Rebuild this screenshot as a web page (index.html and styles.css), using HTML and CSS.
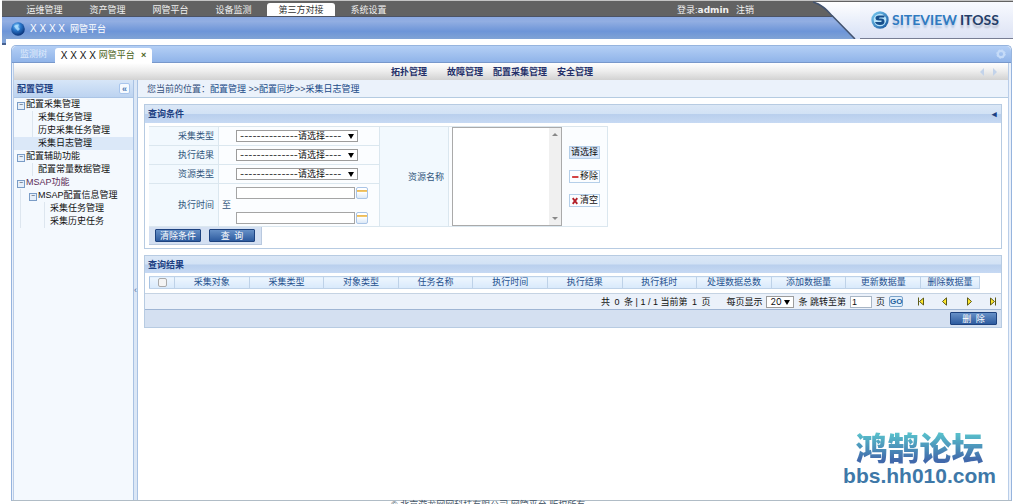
FILE: index.html
```html
<!DOCTYPE html>
<html lang="zh-CN">
<head>
<meta charset="utf-8">
<title>网管平台</title>
<link rel="stylesheet" href="styles.css">
</head>
<body>
<header class="header">
  <div class="topbar">
    <nav class="topnav">
      <a href="#">运维管理</a><a href="#">资产管理</a><a href="#">网管平台</a><a href="#">设备监测</a><a href="#" class="current">第三方对接</a><a href="#">系统设置</a>
    </nav>
    <div class="user"><span>登录:<b>admin</b></span><a href="#">注销</a></div>
  </div>
  <div class="platform">
    <svg class="globe" viewBox="0 0 14 14"><defs><radialGradient id="g1" cx="40%" cy="30%" r="75%"><stop offset="0" stop-color="#8fd4ff"/><stop offset=".4" stop-color="#2a78cc"/><stop offset="1" stop-color="#062a6e"/></radialGradient></defs><circle cx="7" cy="7" r="6.8" fill="url(#g1)"/><path d="M3 4Q5 2 8 2.500L7 5L9 7L7 9L5 7Z" fill="#b5e2ff" opacity=".75"/></svg>
    <span class="xs">X X X X</span><span>网管平台</span>
  </div>
  <div class="brand">
    <svg class="brand-shape" viewBox="0 0 200 39" preserveAspectRatio="none"><defs><linearGradient id="g2" x2="0" y2="1"><stop offset="0" stop-color="#fff"/><stop offset="1" stop-color="#d5e0f6"/></linearGradient><linearGradient id="g3" x2="0" y2="1"><stop offset="0" stop-color="#f8faff"/><stop offset="1" stop-color="#dde3f4"/></linearGradient></defs><path d="M0 1C8 3 13 8 19 15L42 39H47V1Z" fill="url(#g2)"/><path d="M0 1C8 3 13 8 19 15L42 39" fill="none" stroke="#42536f" stroke-width="1.500"/><path d="M47 1H200V38H47Z" fill="url(#g3)"/><path d="M47 38.500H200" stroke="#777c91"/></svg>
    <div class="logo">
      <svg viewBox="0 0 18 18"><defs><linearGradient id="g4" x2="1" y2="1"><stop offset="0" stop-color="#7dd0f5"/><stop offset="1" stop-color="#11509b"/></linearGradient></defs><circle cx="9" cy="9" r="8.700" fill="url(#g4)"/><circle cx="9" cy="9" r="6.300" fill="#b9e4fa"/><path d="M14 4.500H8Q4.500 4.500 4.500 7Q4.500 9.500 8 9.500H10.500Q11 10.500 10 11H4Q5 14 9 14Q13.500 14 13.500 10.500Q13.500 7.500 10 7.500H8Q8 6.500 9 6.500H13Z" fill="#174f8c"/></svg>
      <span class="siteview">SITEVIEW</span><span class="itoss">ITOSS</span>
    </div>
  </div>
</header>

<main class="frame">
  <div class="tabs">
    <a href="#" class="tab">监测树</a>
    <a href="#" class="tab open"><span class="xs">X X X X</span>网管平台<b>×</b></a>
    <svg class="gear" viewBox="0 0 10 10"><circle cx="5" cy="5" r="3.200" fill="none" stroke="#c5dbf8" stroke-width="2.200"/><circle cx="5" cy="5" r="4.300" fill="none" stroke="#c5dbf8" stroke-dasharray="1.500 1.900"/></svg>
  </div>
  <div class="inner">
    <nav class="menu">
      <a href="#">拓扑管理</a><a href="#">故障管理</a><a href="#">配置采集管理</a><a href="#">安全管理</a>
      <svg class="arrows" viewBox="0 0 20 8"><path d="M5 0V8L1 4ZM14 0V8L18 4Z" fill="#c3d3ea"/></svg>
    </nav>
    <div class="body">
      <aside class="side">
        <div class="side-head"><span>配置管理</span><button aria-label="收起">«</button></div>
        <ul class="tree">
          <li><a href="#" class="node">配置采集管理</a>
            <ul><li><a href="#">采集任务管理</a></li><li><a href="#">历史采集任务管理</a></li><li class="selected"><a href="#">采集日志管理</a></li></ul></li>
          <li><a href="#" class="node">配置辅助功能</a>
            <ul><li><a href="#">配置常量数据管理</a></li></ul></li>
          <li><a href="#" class="node msap">MSAP功能</a>
            <ul class="deep"><li><a href="#" class="node">MSAP配置信息管理</a>
              <ul><li><a href="#">采集任务管理</a></li><li><a href="#">采集历史任务</a></li></ul></li></ul></li>
        </ul>
      </aside>
      <div class="splitter">‹</div>
      <section class="content">
        <div class="crumbs">您当前的位置：<a href="#">配置管理</a> &gt;&gt;<a href="#">配置同步</a>&gt;&gt;<a href="#">采集日志管理</a></div>

        <form class="panel query">
          <h2>查询条件<span>◂</span></h2>
          <div class="grid">
            <label class="name" for="ctype">采集类型</label>
            <div class="field"><span class="pick"><select id="ctype"><option>--------------请选择----</option></select></span></div>
            <label class="name" for="result">执行结果</label>
            <div class="field"><span class="pick"><select id="result"><option>--------------请选择----</option></select></span></div>
            <label class="name" for="rtype">资源类型</label>
            <div class="field"><span class="pick"><select id="rtype"><option>--------------请选择----</option></select></span></div>
            <label class="name" for="from">执行时间</label>
            <div class="field times"><label for="to">至</label>
              <div class="dates">
                <div><input id="from" type="text"><button type="button" class="cal" aria-label="日历"></button></div>
                <div><input id="to" type="text"><button type="button" class="cal" aria-label="日历"></button></div>
              </div></div>
            <label class="name tall" for="names">资源名称</label>
            <div class="field tall"><div class="list"><select id="names" multiple></select><span class="bar"><i></i><i></i></span></div></div>
            <div class="field tall acts"><button type="button" class="choose">请选择</button><button type="button"><svg viewBox="0 0 7 7"><path d="M1 3.500H6.500" stroke="#c22" stroke-width="1.500"/></svg>移除</button><button type="button"><svg viewBox="0 0 7 7"><path d="M1.500 1L5.500 6M5.500 1L1.500 6" stroke="#b3202a" stroke-width="1.600"/></svg>清空</button></div>
          </div>
          <div class="submit"><button type="reset" class="blue">清除条件</button><button type="button" class="blue">查&ensp;询</button></div>
        </form>

        <div class="panel results">
          <h2>查询结果</h2>
          <table class="data">
            <thead><tr><th class="check"><input type="checkbox" aria-label="全选"></th><th>采集对象</th><th>采集类型</th><th>对象类型</th><th>任务名称</th><th>执行时间</th><th>执行结果</th><th>执行耗时</th><th>处理数据总数</th><th>添加数据量</th><th>更新数据量</th><th class="last">删除数据量</th></tr></thead>
          </table>
          <div class="pager">
            <span class="count">共&ensp;0&ensp;条 | 1 / 1 当前第&ensp;1&ensp;页</span>
            <label for="size">每页显示</label><span class="pick small"><select id="size"><option>20</option></select></span>
            <label for="page">条 跳转至第</label><input id="page" type="text" value="1"><span>页</span><button class="go">GO</button>
            <div class="turns">
              <button aria-label="首页"><svg viewBox="0 0 8 9"><path d="M1.500 .5V8.500M6.500 1V8L2.500 4.500Z"/></svg></button>
              <button aria-label="上一页"><svg viewBox="0 0 8 9"><path d="M5.500 .8V8.200L1.500 4.500Z"/></svg></button>
              <button aria-label="下一页"><svg viewBox="0 0 8 9"><path d="M2.500 .8V8.200L6.500 4.500Z"/></svg></button>
              <button aria-label="末页"><svg viewBox="0 0 8 9"><path d="M6.500 .5V8.500M1.500 1V8L5.500 4.500Z"/></svg></button>
            </div>
          </div>
          <div class="foot"><button class="blue">删&ensp;除</button></div>
        </div>
        <div class="mark"><strong>鸿鹄论坛</strong><span>bbs.hh010.com</span></div>
      </section>
    </div>
  </div>
</main>
<footer class="copy">© 北京游龙网网科技有限公司 网管平台 版权所有</footer>
</body>
</html>
```

FILE: styles.css
```css
* { box-sizing: border-box; }
body {
  margin: 0; height: 100vh; overflow: hidden; display: flex; flex-direction: column;
  background: #fff; color: #111;
  font: 9px/12px "Liberation Sans", "Noto Sans CJK SC", sans-serif;
}
a { color: inherit; text-decoration: none; }
button, input, select { font: inherit; color: inherit; margin: 0; border-radius: 0; }
button { padding: 0; background: none; border: 0; }
ul { list-style: none; margin: 0; padding: 0; }
.xs { font-size: 10px; }

.header {
  position: relative; flex: none; margin: 0 0 6px 2px; border-top: 1px solid #c4c4c4;
  display: grid; grid-template-columns: 1fr 200px; grid-template-rows: 16px 22px;
}
.header::after { content: ""; position: absolute; left: 0; top: 38px; width: 4px; height: 6px; background: linear-gradient(#7fa2d8 70%, #47618f 70%); }
.topbar { grid-area: 1 / 1 / 2 / 3; display: flex; justify-content: space-between; background: #626262; border-bottom: 1px solid #4c5364; color: #f0f0f0; }
.topnav { display: flex; padding: 2px 0 0 11px; }
.topnav a { width: 63px; text-align: center; line-height: 14px; }
.topnav .current { width: 68px; margin: 0 2px; color: #333; background: #fff; border-radius: 3px 3px 0 0; }
.user { display: flex; gap: 7px; margin-right: 259px; line-height: 18px; }
.user b { font-family: "DejaVu Sans", sans-serif; font-size: 9px; }
.platform { grid-area: 2 / 1 / 3 / 3; display: flex; align-items: center; gap: 5px; padding: 1px 0 0 9px; color: #fff; background: linear-gradient(#8ba9e2, #92aee2 20%, #6d95d8 65%, #80a3d5); }
.globe { width: 14px; height: 14px; }
.brand { grid-area: 1 / 2 / 3 / 3; position: relative; display: flex; }
.brand-shape { position: absolute; left: 0; top: 0; width: 100%; height: 100%; }
.logo { position: relative; display: flex; align-items: center; gap: 3px; padding: 0 0 0 58px; }
.logo svg { width: 18px; height: 18px; }
.siteview { color: #2f7ac0; text-shadow: 0 3px 2px #b6c9e5; font: bold 14px/16px Lato, sans-serif; }
.itoss { color: #243e68; text-shadow: 0 3px 2px #b6bdd0; font: bold 14px/16px Lato, sans-serif; }

.frame { flex: 1; min-height: 0; display: flex; flex-direction: column; margin: 0 1px 0 11px; border: 1px solid #96b4de; border-bottom-color: #b0bcc6; border-radius: 5px 5px 0 0; background: #eaf1fb; }
.tabs { flex: none; display: flex; align-items: flex-end; height: 17px; padding: 0 5px 0 0; border-radius: 5px 5px 0 0; background: linear-gradient(#b4cff5, #90b4e9); border-bottom: 1px solid #7898cb; }
.tab { width: 43px; text-align: center; line-height: 15px; color: #dfebfc; }
.tab.open { width: 97px; height: 15px; margin-bottom: -1px; display: flex; align-items: center; justify-content: center; gap: 3px; background: #fff; color: #4c651c; border-radius: 3px 3px 0 0; }
.open .xs { color: #111; }
.open b { margin-left: 3px; }
.gear { width: 10px; height: 10px; margin: 0 0 3px auto; }
.inner { flex: 1; min-height: 0; display: flex; flex-direction: column; margin: 0 2px 0 1px; border: 1px solid #b9cde8; border-width: 0 1px; background: #fff; }
.menu { flex: none; position: relative; display: flex; justify-content: center; gap: 10px; height: 17px; padding: 0 38px 0 0; background: linear-gradient(#fff, #ececec 50%, #d2d2d2); color: #24306a; font-weight: bold; line-height: 18px; }
.menu a:first-child { margin-right: 10px; }
.arrows { position: absolute; right: 9px; top: 5px; width: 20px; height: 8px; }
.body { flex: 1; min-height: 0; display: flex; }

.side { flex: none; width: 119px; background: #f4f9fe; }
.side-head { display: flex; align-items: center; justify-content: space-between; height: 18px; padding: 0 3px; background: linear-gradient(#d7e6f8, #bcd3f0); border-bottom: 1px solid #abc5e6; color: #1b3e82; font-weight: bold; }
.side-head button { width: 11px; height: 11px; border: 1px solid #a8c5ec; background: #f5faff; border-radius: 2px; line-height: 8px; color: #4a78b4; }
.tree li a { display: block; line-height: 13px; height: 13px; padding-left: 24px; white-space: nowrap; }
.tree .node { position: relative; padding-left: 12px; }
.tree .node::before { content: "−"; position: absolute; left: 3px; top: 4px; width: 6px; height: 6px; border: 1px solid #7a9cc6; background: #e5effa; color: #345; font-size: 7px; line-height: 4px; text-align: center; }
.tree .msap { color: #5a2d55; }
.tree .selected { background: #dbe8f8; }
.tree ul { background-image: linear-gradient(#dde6ef, #dde6ef); background-size: 1px 100%; background-position: 18px 0; background-repeat: no-repeat; }
.tree .deep { padding-left: 12px; background-position: 6px 0; }
.splitter { flex: none; width: 5px; display: flex; align-items: center; border: 1px solid #a9c2e3; border-width: 0 1px; background: #dbe7f6; color: #5070a0; }

.content { position: relative; flex: 1; min-width: 0; }
.crumbs { height: 18px; padding-left: 9px; line-height: 18px; background: #ebf2fb; border-bottom: 1px solid #b4cbe1; color: #33507c; }
.crumbs a { color: #204a87; }
.panel { margin: 6px 6px 0; border: 1px solid #b7cbe2; }
.panel h2 { display: flex; justify-content: space-between; margin: 0; padding: 0 4px 0 3px; font-size: 9px; line-height: 18px; height: 18px; color: #1b3e82; background: linear-gradient(#dbe7f6, #d2e2f5 48%, #b9cfed 52%, #c6d9f3); }
.query { padding-bottom: 3px; }
.results h2 { height: 17px; }
.grid { display: grid; width: max-content; margin: 3px 0 0 4px; grid-template-columns: 70px 161px 69px 113px 46px; grid-template-rows: 19px 19px 19px 43px; grid-auto-flow: row; border-top: 1px solid #dbe5ec; }
.name, .field { border: 1px solid #dbe7ef; border-width: 0 1px 1px 0; display: flex; align-items: center; }
.name { grid-column: 1; justify-content: flex-end; padding-right: 4px; background: #f2f9fe; color: #31567c; }
.field { grid-column: 2; padding-left: 17px; background: #fbfdff; }
.tall { grid-row: 1 / 5; }
.name.tall { grid-column: 3; }
.field.tall { grid-column: 4; padding: 0 0 0 3px; border-right: 0; }
.field.acts { grid-column: 5; flex-direction: column; align-items: flex-start; justify-content: center; gap: 11px; padding-left: 7px; border-right: 1px solid #dbe7ef; }
.field.times { padding-left: 3px; gap: 5px; color: #31567c; }
.dates { display: grid; gap: 13px; }
.dates > div { display: flex; gap: 1px; }
.dates input { width: 119px; height: 12px; padding: 0 2px; border: 1px solid #a5a5a5; background: #fff; }
.cal { width: 12px; height: 12px; border: 1px solid #a9c4e6; border-radius: 2px; background: linear-gradient(#fff 15%, #e8b04a 15%, #f4cd72 40%, #fff 40%, #dce9f7); }
.pick { position: relative; display: flex; width: 122px; height: 12px; }
.pick::after { content: ""; position: absolute; right: 4px; top: 4px; border: 3px solid transparent; border-top: 5px solid #000; border-bottom: 0; pointer-events: none; }
.pick select { appearance: none; width: 100%; height: 100%; padding: 0 0 0 3px; border: 1px solid #9c9c9c; background: #fff; font: 9px/10px Inter, "Noto Sans CJK SC", sans-serif; }
.list { display: flex; width: 110px; height: 99px; border: 1px solid #aaa; background: #fff; }
.list select { flex: 1; min-width: 0; height: 100%; border: 0; background: #fff; outline: 0; }
.bar { width: 12px; display: flex; flex-direction: column; justify-content: space-between; align-items: center; padding: 5px 0; background: #f0f0f0; }
.bar i { border: 3px solid transparent; border-bottom-color: #888; border-top: 0; }
.bar i + i { border: 3px solid transparent; border-top-color: #888; border-bottom: 0; }
.acts button { display: flex; align-items: center; gap: 1px; height: 13px; padding: 0 1px; border: 1px solid #b5cfe9; line-height: 11px; white-space: nowrap; }
.acts .choose { background: #dae7f9; }
.acts svg { width: 8px; height: 8px; }
.submit { display: flex; gap: 8px; width: 113px; height: 18px; margin-left: 4px; padding: 2px 6px; background: #d4e0f2; border-bottom: 1px solid #b9c9df; border-right: 1px solid #b9c9df; }
.blue { width: 47px; height: 13px; border: 1px solid #1d427f; border-radius: 1px; background: linear-gradient(#6690c7, #2d5b9f); color: #fff; line-height: 10px; }

.data { width: calc(100% - 25px); margin: 3px 0 4px 4px; border-collapse: collapse; table-layout: fixed; }
.data th { height: 12px; padding: 0; border: 1px solid #bed2e8; border-left-color: #a8c3e2; background: linear-gradient(#eef6fe, #d8e9fb); color: #24508e; font-weight: normal; line-height: 11px; }
.data .check { width: 25px; }
.data .last { width: 59px; }
.data input { display: block; width: 9px; height: 9px; margin: 0 auto; appearance: none; border: 1px solid #aaa; border-radius: 2px; background: #f4f4f4; }
.pager { display: flex; align-items: center; justify-content: flex-end; gap: 4px; height: 16px; padding-right: 4px; background: #ebf1fa; border-top: 1px solid #c5d3e3; white-space: nowrap; }
.count { margin-right: 12px; }
.pager input { width: 22px; height: 12px; padding: 0 1px; border: 1px solid #a9b6c5; background: #fff; }
.pick.small { width: 28px; }
.go { width: 14px; height: 11px; border: 1px solid #7ba2c9; border-radius: 2px; background: #e1effc; color: #23609b; line-height: 8px; font-weight: bold; font-size: 8px; }
.turns { display: flex; gap: 16px; margin-left: 10px; }
.turns button { display: flex; }
.turns svg { width: 8px; height: 9px; fill: #ffe82e; stroke: #5d5a16; stroke-width: 1; }
.foot { display: flex; justify-content: flex-end; align-items: center; height: 18px; padding-right: 4px; background: #d4e0f1; border-top: 1px solid #9fb5d4; }
.mark { position: absolute; right: 12px; bottom: 14px; display: flex; flex-direction: column; align-items: center; color: #3e78a8; }
.mark strong { font: 900 32px/40px "Noto Sans CJK SC", sans-serif; background: linear-gradient(#58bfcb 20%, #4169ab 85%); background-clip: text; color: transparent; }
.mark span { font: bold 21px/20px "Liberation Sans", sans-serif; }
.copy { flex: none; height: 3px; padding-left: 391px; line-height: 9px; color: #456; white-space: nowrap; }
```
